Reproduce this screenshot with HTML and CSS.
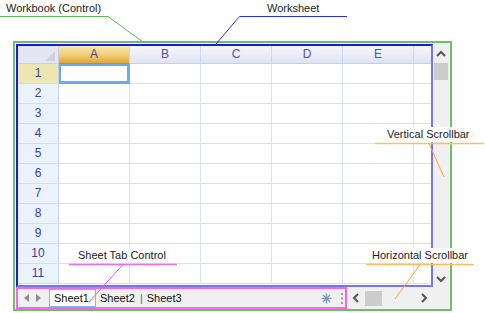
FILE: index.html
```html
<!DOCTYPE html>
<html>
<head>
<meta charset="utf-8">
<link rel="stylesheet" href="styles.css">
</head>
<body>
<div class="workbook">
  <div class="sheet-wrap">
    <div class="sheet">
      <div class="row hdr-row">
        <div class="corner"><svg width="10" height="10" class="corner-tri"><polygon points="10,0 10,10 0,10" fill="#cfd1dd"/></svg></div>
        <div class="ch sel">A</div><div class="ch">B</div><div class="ch">C</div><div class="ch">D</div><div class="ch">E</div><div class="ch last"></div>
      </div>
      <div class="row"><div class="rh sel">1</div><div class="c active"></div><div class="c"></div><div class="c"></div><div class="c"></div><div class="c"></div><div class="c last"></div></div>
      <div class="row"><div class="rh">2</div><div class="c"></div><div class="c"></div><div class="c"></div><div class="c"></div><div class="c"></div><div class="c last"></div></div>
      <div class="row"><div class="rh">3</div><div class="c"></div><div class="c"></div><div class="c"></div><div class="c"></div><div class="c"></div><div class="c last"></div></div>
      <div class="row"><div class="rh">4</div><div class="c"></div><div class="c"></div><div class="c"></div><div class="c"></div><div class="c"></div><div class="c last"></div></div>
      <div class="row"><div class="rh">5</div><div class="c"></div><div class="c"></div><div class="c"></div><div class="c"></div><div class="c"></div><div class="c last"></div></div>
      <div class="row"><div class="rh">6</div><div class="c"></div><div class="c"></div><div class="c"></div><div class="c"></div><div class="c"></div><div class="c last"></div></div>
      <div class="row"><div class="rh">7</div><div class="c"></div><div class="c"></div><div class="c"></div><div class="c"></div><div class="c"></div><div class="c last"></div></div>
      <div class="row"><div class="rh">8</div><div class="c"></div><div class="c"></div><div class="c"></div><div class="c"></div><div class="c"></div><div class="c last"></div></div>
      <div class="row"><div class="rh">9</div><div class="c"></div><div class="c"></div><div class="c"></div><div class="c"></div><div class="c"></div><div class="c last"></div></div>
      <div class="row"><div class="rh">10</div><div class="c"></div><div class="c"></div><div class="c"></div><div class="c"></div><div class="c"></div><div class="c last"></div></div>
      <div class="row"><div class="rh">11</div><div class="c"></div><div class="c"></div><div class="c"></div><div class="c"></div><div class="c"></div><div class="c last"></div></div>
    </div>
  </div>
  <div class="vscroll">
    <div class="vbtn up"><svg width="10" height="7"><polyline points="1,6 5,2 9,6" fill="none" stroke="#555" stroke-width="2"/></svg></div>
    <div class="vthumb"></div>
    <div class="vspace"></div>
    <div class="vbtn down"><svg width="10" height="7"><polyline points="1,1 5,5 9,1" fill="none" stroke="#555" stroke-width="2"/></svg></div>
  </div>
  <div class="bottom">
    <div class="tabs">
      <svg class="nav" width="30" height="18"><polygon points="6,9 11,5 11,13" fill="#8c8c8c"/><polygon points="23,9 18,5 18,13" fill="#8c8c8c"/></svg>
      <div class="tab active-tab">Sheet1</div>
      <div class="tab">Sheet2</div>
      <div class="sep">|</div>
      <div class="tab">Sheet3</div>
      <div class="tab-space"></div>
      <svg class="star" width="11" height="11"><g stroke="#8593b3" stroke-width="1.3"><line x1="5.5" y1="0.5" x2="5.5" y2="10.5"/><line x1="0.5" y1="5.5" x2="10.5" y2="5.5"/><line x1="2" y1="2" x2="9" y2="9"/><line x1="9" y1="2" x2="2" y2="9"/></g></svg>
      <svg class="grip" width="3" height="11"><rect x="0" y="0" width="2" height="2" fill="#9a9a9a"/><rect x="0" y="4.5" width="2" height="2" fill="#9a9a9a"/><rect x="0" y="9" width="2" height="2" fill="#9a9a9a"/></svg>
    </div>
    <div class="hscroll">
      <svg class="harrow" width="7" height="10"><polyline points="6,1 2,5 6,9" fill="none" stroke="#555" stroke-width="2"/></svg>
      <div class="hthumb"></div>
      <div class="hspace"></div>
      <svg class="harrow" width="7" height="10"><polyline points="1,1 5,5 1,9" fill="none" stroke="#555" stroke-width="2"/></svg>
    </div>
    <div class="bcorner"></div>
  </div>
</div>

<svg class="annot" width="485" height="313">
  <polyline points="0,16.5 108,16.5 143,42" fill="none" stroke="#5cb85c" stroke-width="1"/>
  <polyline points="347,16.5 239.5,16.5 216,44" fill="none" stroke="#2a2af0" stroke-width="1"/>
  <line x1="375" y1="143.5" x2="484" y2="143.5" stroke="#ffbe5a" stroke-width="1.5"/>
  <line x1="429" y1="143.5" x2="444" y2="177" stroke="#ffa726" stroke-width="1"/>
  <line x1="69" y1="264.5" x2="177" y2="264.5" stroke="#f46af4" stroke-width="1.5"/>
  <line x1="123" y1="264.5" x2="89" y2="302" stroke="#f050f0" stroke-width="1"/>
  <line x1="366" y1="264.5" x2="474" y2="264.5" stroke="#ffbe5a" stroke-width="1.5"/>
  <line x1="420" y1="264.5" x2="395" y2="299" stroke="#ffa726" stroke-width="1"/>
</svg>
<div class="label lbl-workbook">Workbook (Control)</div>
<div class="label lbl-worksheet">Worksheet</div>
<div class="label lbl-vscroll">Vertical Scrollbar</div>
<div class="label lbl-tabs">Sheet Tab Control</div>
<div class="label lbl-hscroll">Horizontal Scrollbar</div>
</body>
</html>
```

FILE: styles.css
```css
html, body {
  margin: 0;
  padding: 0;
}
body {
  width: 485px;
  height: 313px;
  position: relative;
  overflow: hidden;
  background: #ffffff;
  font-family: "Liberation Sans", Arial, sans-serif;
}
.workbook {
  margin: 41px 0 0 13px;
  width: 439px;
  height: 270px;
  box-sizing: border-box;
  border: 2px solid #6cc063;
  display: grid;
  grid-template-columns: 418px 16px;
  grid-template-rows: 244px 22px;
  background: #ffffff;
}
.sheet-wrap {
  padding: 1px 0 0 1px;
}
.sheet {
  box-sizing: border-box;
  width: 417px;
  height: 243px;
  border: 2px solid;
  border-color: #1a1ae0 #7474f4 #7474f4 #1a1ae0;
  overflow: hidden;
  background: #ffffff;
}
.row {
  display: flex;
  height: 20px;
}
.hdr-row {
  height: 18px;
}
.row > div {
  box-sizing: border-box;
  flex: none;
}
.corner {
  width: 41px;
  background: #e4e6f4;
  border-right: 1px solid #c8d0e6;
  border-bottom: 1px solid #c8d0e6;
  position: relative;
}
.corner-tri {
  position: absolute;
  right: 3px;
  bottom: 2px;
}
.ch {
  width: 71px;
  background: linear-gradient(#f6f7fc, #dfe3f3);
  border-right: 1px solid #cdd5ea;
  border-bottom: 1px solid #c6cde4;
  color: #5a4db0;
  font-size: 12px;
  line-height: 17px;
  text-align: center;
}
.ch.sel {
  background: linear-gradient(#f9e7b0, #f0cd72 55%, #e0a733);
  border-bottom: 1px solid #c58f26;
  color: #4b3f86;
}
.rh {
  width: 41px;
  background: #eaf2fc;
  border-right: 1px solid #c6d2e6;
  border-bottom: 1px solid #d2dced;
  color: #3d3d9c;
  font-size: 12px;
  line-height: 19px;
  text-align: center;
}
.rh.sel {
  background: #ece7b2;
}
.c {
  width: 71px;
  border-right: 1px solid #dbe1ee;
  border-bottom: 1px solid #dbe1ee;
}
.row > .last {
  flex: 1;
  border-right: none;
}
.c.active {
  box-shadow: inset 0 0 0 2px #6aaaf2;
  border-color: #6aaaf2;
}
.vscroll {
  background: #f0f0f0;
  display: flex;
  flex-direction: column;
}
.vbtn {
  display: flex;
  align-items: center;
  justify-content: center;
}
.vbtn.up {
  height: 20px;
}
.vbtn.down {
  height: 15px;
}
.vthumb {
  height: 17px;
  margin: 0 1px;
  background: #cdcdcd;
}
.vspace {
  flex: 1;
}
.bottom {
  grid-column: 1 / 3;
  display: flex;
  background: #f0f0f0;
  padding-left: 1px;
}
.tabs {
  box-sizing: border-box;
  width: 331px;
  height: 22px;
  border: 2px solid #f266f2;
  display: flex;
  align-items: center;
  font-size: 11px;
  color: #111;
}
.nav {
  flex: none;
}
.tab {
  line-height: 16px;
}
.active-tab {
  margin-left: 1px;
  width: 47px;
  box-sizing: border-box;
  height: 18px;
  background: #ffffff;
  border: 1px solid #86b5ea;
  padding-left: 4px;
}
.active-tab + .tab {
  margin-left: 4px;
}
.sep {
  margin: 0 4px 0 5px;
  color: #666;
  line-height: 16px;
}
.tab-space {
  flex: 1;
}
.star {
  margin-right: 9px;
}
.grip {
  margin-right: 1px;
}
.hscroll {
  width: 86px;
  display: flex;
  align-items: center;
  padding-left: 5px;
  box-sizing: border-box;
}
.hthumb {
  width: 17px;
  height: 15px;
  margin-left: 6px;
  background: #cdcdcd;
}
.hspace {
  flex: 1;
}
.harrow {
  flex: none;
}
.hscroll .harrow:last-child {
  margin-right: 5px;
}
.bcorner {
  flex: 1;
}
.annot {
  position: absolute;
  left: 0;
  top: 0;
  pointer-events: none;
}
.label {
  position: absolute;
  background: #ffffff;
  font-size: 11px;
  line-height: 13px;
  padding: 1px 3px;
  color: #222;
  white-space: nowrap;
}
.lbl-workbook { left: 3px; top: 1px; }
.lbl-worksheet { left: 264px; top: 1px; }
.lbl-vscroll { left: 384px; top: 127px; }
.lbl-tabs { left: 75px; top: 248px; }
.lbl-hscroll { left: 369px; top: 248px; }
```
